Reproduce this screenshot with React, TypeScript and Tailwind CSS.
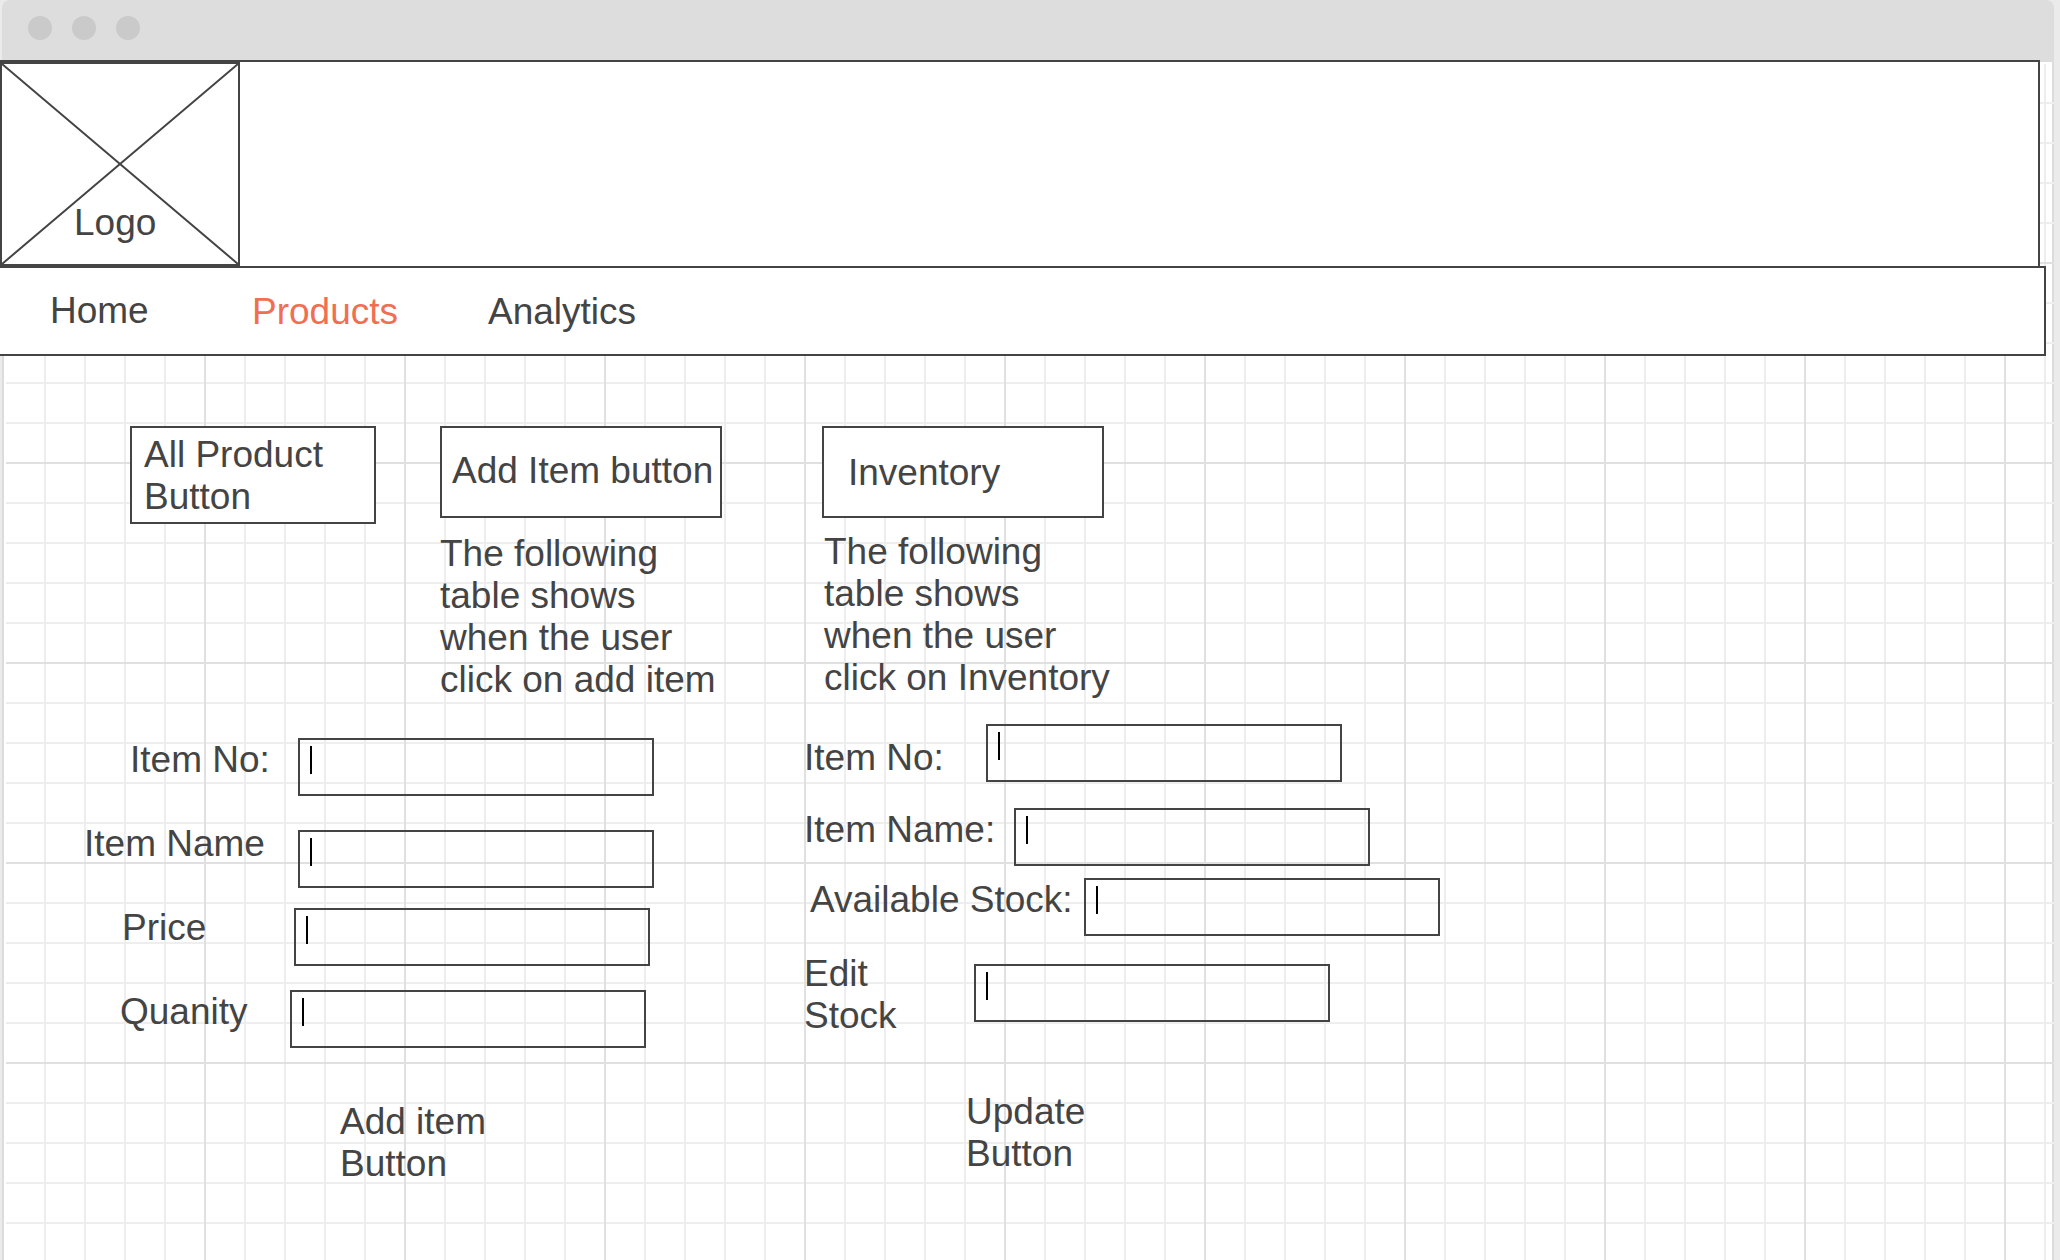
import React from "react";

type Field = {
  id: string;
  label: React.ReactNode;
  row: string;
  labelClass: string;
  inputClass: string;
};

const addFields: Field[] = [
  { id: "add-no", label: "Item No:", row: "min-h-[84px]", labelClass: "w-[298px] pl-[130px] pt-px", inputClass: "" },
  { id: "add-name", label: "Item Name", row: "min-h-[84px]", labelClass: "w-[298px] pl-[84px] pt-px", inputClass: "pt-2" },
  { id: "add-price", label: "Price", row: "min-h-[84px]", labelClass: "w-[294px] pl-[122px] pt-px", inputClass: "pt-0.5" },
  { id: "add-quantity", label: "Quanity", row: "min-h-[84px]", labelClass: "w-[290px] pl-[120px] pt-px", inputClass: "" },
];

const stockFields: Field[] = [
  { id: "stock-no", label: "Item No:", row: "min-h-[84px]", labelClass: "w-[182px] pt-[13px]", inputClass: "" },
  { id: "stock-name", label: "Item Name:", row: "min-h-[70px]", labelClass: "w-[210px] pt-px", inputClass: "" },
  { id: "stock-available", label: "Available Stock:", row: "min-h-[74px]", labelClass: "w-[280px] pl-1.5 pt-px", inputClass: "" },
  {
    id: "stock-edit",
    label: (
      <>
        Edit
        <br />
        Stock
      </>
    ),
    row: "min-h-[84px]",
    labelClass: "w-[170px] pt-px",
    inputClass: "pt-3",
  },
];

function FieldRow({ field }: { field: Field }) {
  return (
    <div className={`flex items-start ${field.row}`}>
      <label htmlFor={field.id} className={`shrink-0 whitespace-nowrap ${field.labelClass}`}>
        {field.label}
      </label>
      <div className={field.inputClass}>
        <div className="relative">
          <input
            id={field.id}
            type="text"
            className="block h-[58px] w-[356px] border-2 border-[#444] bg-transparent px-3 outline-none"
          />
          <span aria-hidden="true" className="pointer-events-none absolute left-3 top-2 h-7 w-0.5 bg-black" />
        </div>
      </div>
    </div>
  );
}

function GridPaper() {
  return (
    <div aria-hidden="true" className="col-start-1 row-start-1 ml-0.5 mr-1.5 flex border-x-2 border-[#dcdcdc] bg-white pt-16">
      <div className="-mr-0.5 ml-0.5 flex-1 bg-[linear-gradient(90deg,#e0e0e0_2px,transparent_2px),linear-gradient(#e0e0e0_2px,transparent_2px),linear-gradient(90deg,#eeeeee_2px,transparent_2px),linear-gradient(#eeeeee_2px,transparent_2px)] bg-[size:200px_200px,200px_200px,40px_40px,40px_40px] bg-[position:198px_0,0_198px,38px_0,0_38px]" />
    </div>
  );
}

export default function App() {
  return (
    <div className="grid min-h-screen grid-cols-1 bg-[#ebebeb] font-['Liberation_Sans',Arial,sans-serif] text-[37px] leading-[42px] text-[#444]">
      <GridPaper />
      <div className="col-start-1 row-start-1 flex flex-col">
        <div className="bg-[#ebebeb] pl-0.5 pr-1.5">
          <div className="flex h-[62px] gap-5 rounded-t-lg bg-[#ddd] pl-[26px] pt-4">
            <span className="size-6 rounded-full bg-[#cacaca]" />
            <span className="size-6 rounded-full bg-[#cacaca]" />
            <span className="size-6 rounded-full bg-[#cacaca]" />
          </div>
        </div>

        <header className="relative -mt-0.5 mr-5 border-r-2 border-t-2 border-[#444] bg-white">
          <div className="relative flex h-[204px] w-60 items-end border-2 border-[#444] pb-5 pl-[72px]">
            <svg className="absolute inset-0 size-full" viewBox="0 0 236 200" preserveAspectRatio="none" aria-hidden="true">
              <path d="M0 0L236 200M236 0L0 200" stroke="#444" strokeWidth="2" fill="none" />
            </svg>
            <span className="relative">Logo</span>
          </div>
        </header>

        <nav className="mr-3.5 border-y-2 border-r-2 border-[#444] bg-white">
          <ul className="flex h-[86px] items-center pl-[50px]">
            <li className="w-[202px]">
              <a href="#home">Home</a>
            </li>
            <li className="w-[236px] pt-0.5">
              <a href="#products" aria-current="page" className="text-[#f06e52]">
                Products
              </a>
            </li>
            <li className="pt-0.5">
              <a href="#analytics">Analytics</a>
            </li>
          </ul>
        </nav>

        <main className="pt-[70px]">
          <div className="flex items-start pl-[130px]">
            <button type="button" className="mr-16 h-[98px] w-[246px] border-2 border-[#444] bg-white pl-3 pt-0.5 text-left">
              All Product
              <br />
              Button
            </button>
            <div className="mr-[100px] w-[282px]">
              <button type="button" className="h-[92px] w-full whitespace-nowrap border-2 border-[#444] bg-white pb-0.5 pl-2.5 text-left">
                Add Item button
              </button>
              <p className="whitespace-nowrap pt-[15px]">
                The following
                <br />
                table shows
                <br />
                when the user
                <br />
                click on add item
              </p>
            </div>
            <div className="w-[282px]">
              <button type="button" className="h-[92px] w-full border-2 border-[#444] bg-white pl-6 pt-0.5 text-left">
                Inventory
              </button>
              <p className="whitespace-nowrap pl-0.5 pt-[13px]">
                The following
                <br />
                table shows
                <br />
                when the user
                <br />
                click on Inventory
              </p>
            </div>
          </div>

          <div className="-mt-px flex items-start">
            <form className="w-[802px] shrink-0 pt-[38px]">
              {addFields.map((f) => (
                <FieldRow key={f.id} field={f} />
              ))}
              <button type="button" className="ml-[340px] mt-[27px] block text-left">
                Add item
                <br />
                Button
              </button>
            </form>
            <form className="pl-0.5 pt-6">
              {stockFields.map((f) => (
                <FieldRow key={f.id} field={f} />
              ))}
              <button type="button" className="ml-[162px] mt-[54px] block text-left">
                Update
                <br />
                Button
              </button>
            </form>
          </div>
        </main>
      </div>
    </div>
  );
}
